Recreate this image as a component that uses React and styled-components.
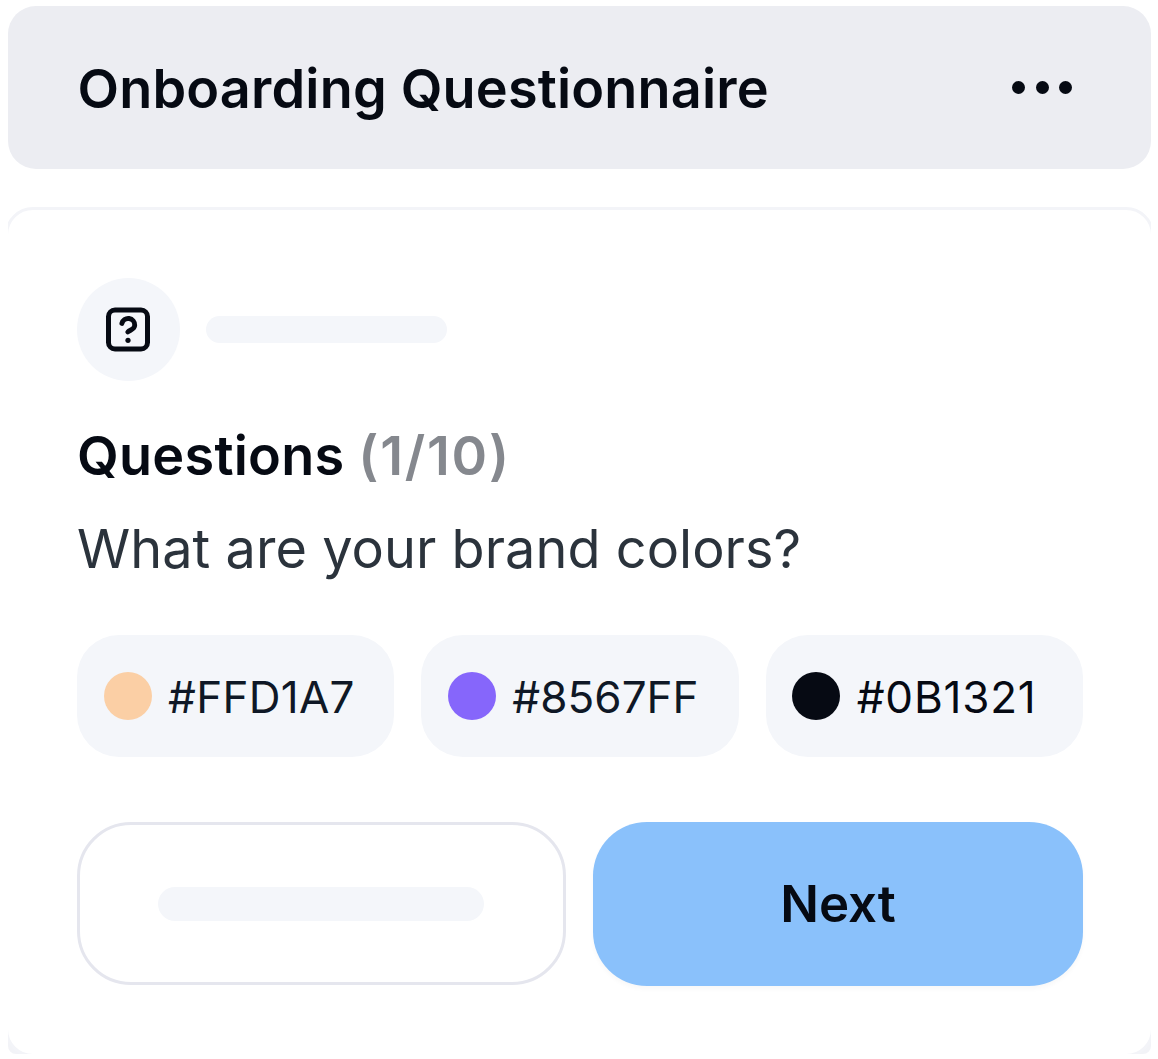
import React from "react";
import styled, { createGlobalStyle } from "styled-components";

const swatches = [
    { hex: "#FFD1A7", fill: "#fbcfa5", text: "#0f1826", spacing: 0.3 },
    { hex: "#8567FF", fill: "#8666fb", text: "#0f1826", spacing: 0.05 },
    { hex: "#0B1321", fill: "#060a13", text: "#060a13", spacing: 0.8 },
];

function QuestionIcon() {
    return (
        <svg width="46" height="46" viewBox="0 0 46 46" fill="none" stroke="#060a13" strokeLinecap="round" strokeLinejoin="round">
            <rect x="3.5" y="3" width="39" height="39" rx="6.5" strokeWidth="5" />
            <path d="M16.9 16.4a6.5 6.5 0 0 1 12.8 1.8c0 4-4.4 4.6-6.9 6.8" strokeWidth="4.9" />
            <circle cx="23" cy="33.3" r="2.6" fill="#060a13" stroke="none" />
        </svg>
    );
}

function App() {
    return (
        <>
            <GlobalStyle />
            <Page>
                <Header>
                    <Title>Onboarding Questionnaire</Title>
                    <MoreButton aria-label="More">
                        <Dot />
                        <Dot />
                        <Dot />
                    </MoreButton>
                </Header>
                <CardFrame>
                    <Card>
                        <IconRow>
                            <IconCircle>
                                <QuestionIcon />
                            </IconCircle>
                            <Placeholder $width={241} $height={27} />
                        </IconRow>
                        <Heading>
                            Questions <Count>(1/10)</Count>
                        </Heading>
                        <Question>What are your brand colors?</Question>
                        <Swatches>
                            {swatches.map((swatch) => (
                                <Swatch key={swatch.hex} $color={swatch.text} $spacing={swatch.spacing}>
                                    <Circle $color={swatch.fill} />
                                    <Hex>{swatch.hex}</Hex>
                                </Swatch>
                            ))}
                        </Swatches>
                        <Actions>
                            <BackButton aria-label="Back">
                                <Placeholder $width={326} $height={34} />
                            </BackButton>
                            <NextButton>Next</NextButton>
                        </Actions>
                    </Card>
                </CardFrame>
            </Page>
        </>
    );
}

export default App;

const GlobalStyle = createGlobalStyle`
* {
    box-sizing: border-box;
}
body {
    margin: 0;
    background: #ffffff;
    font-family: Inter, "Liberation Sans", sans-serif;
    color: #060a13;
}
`

const Page = styled.div`
width: 1158px;
height: 1059px;
padding: 6px 7px 5px 8px;
overflow: hidden;
`

const Header = styled.header`
display: flex;
align-items: center;
justify-content: space-between;
height: 163px;
padding: 0 79px 0 69.5px;
border-radius: 28px;
background: #ecedf2;
`

const Title = styled.h1`
margin: 0;
padding-top: 2px;
font-size: 54px;
font-weight: 600;
line-height: 64px;
letter-spacing: 0.18px;
white-space: nowrap;
`

const MoreButton = styled.button`
display: flex;
gap: 10.5px;
padding: 0;
border: none;
background: none;
`

const Dot = styled.span`
width: 13px;
height: 13px;
border-radius: 50%;
background: #060a13;
`

// the card's side and bottom borders run past the frame and are clipped by it
const CardFrame = styled.main`
height: 847px;
margin-top: 38px;
border-radius: 0 0 8px 8px;
background: linear-gradient(#ffffff 50%, #f2f3f7 50%);
overflow: hidden;
`

const Card = styled.div`
height: 850px;
margin: 0 -3px;
padding: 68px 68px 0 69px;
border: 3px solid #f3f4f8;
border-radius: 28px;
background: #ffffff;
`

const IconRow = styled.div`
display: flex;
align-items: center;
gap: 26px;
`

const IconCircle = styled.div`
display: flex;
align-items: center;
justify-content: center;
width: 103px;
height: 103px;
padding: 0 1px 0 0;
border-radius: 50%;
background: #f4f6fa;
`

const Placeholder = styled.div`
width: ${(props) => props.$width}px;
height: ${(props) => props.$height}px;
border-radius: 17px;
background: #f4f6fa;
`

const Heading = styled.h2`
margin: 43px 0 0;
font-size: 54px;
font-weight: 600;
line-height: 64px;
letter-spacing: 0.25px;
white-space: nowrap;
`

const Count = styled.span`
color: #85888e;
letter-spacing: 1.75px;
`

const Question = styled.p`
margin: 29px 0 0;
font-size: 54px;
line-height: 64px;
letter-spacing: 0.05px;
color: #2b333c;
white-space: nowrap;
`

const Swatches = styled.div`
display: flex;
gap: 27px;
margin-top: 54.4px;
`

const Swatch = styled.div`
display: flex;
flex: 1;
align-items: center;
gap: 16.5px;
height: 122px;
padding-left: 26.5px;
border-radius: 42px;
background: #f4f6fa;
color: ${(props) => props.$color};
font-size: 44px;
letter-spacing: ${(props) => props.$spacing}px;
white-space: nowrap;
`

const Circle = styled.span`
width: 48px;
height: 48px;
border-radius: 50%;
background: ${(props) => props.$color};
`

const Hex = styled.span`
padding-top: 2px;
`

const Actions = styled.div`
display: flex;
gap: 27px;
margin-top: 64.6px;
`

const BackButton = styled.button`
display: flex;
align-items: center;
justify-content: center;
width: 489px;
height: 163px;
padding: 1px 1px 0 0;
border: 3px solid #e5e6ee;
border-radius: 54px;
background: #ffffff;
`

const NextButton = styled.button`
width: 490px;
height: 164px;
padding: 0 0 1px 0;
border: none;
border-radius: 54px;
background: #8ac1fb;
color: #060a13;
font-family: inherit;
font-size: 51px;
font-weight: 600;
box-shadow: 0 3px 5px rgba(5, 8, 18, 0.03);
`
